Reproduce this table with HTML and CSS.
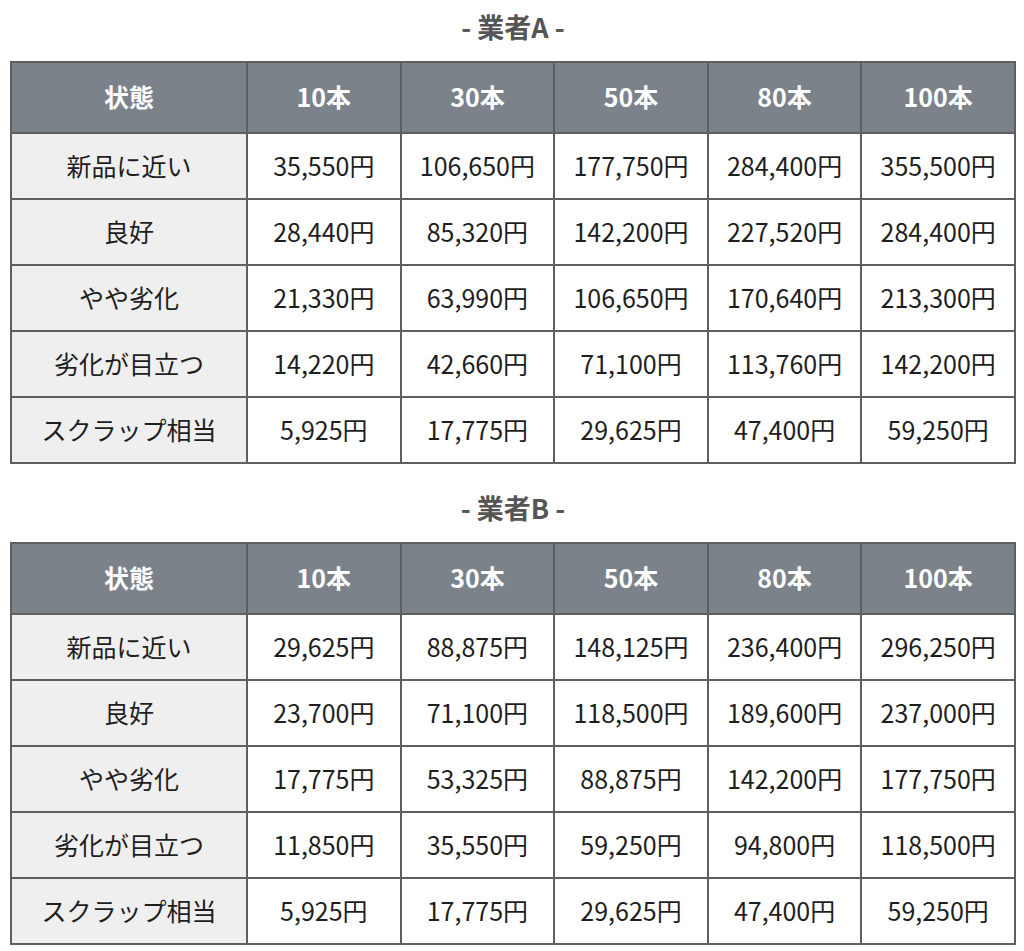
FILE: index.html
```html
<!DOCTYPE html>
<html lang="ja">
<head>
<meta charset="utf-8">
<link rel="stylesheet" href="styles.css">
</head>
<body>
<div class="page">
  <h2 class="title">- 業者A -</h2>
  <table class="price">
    <colgroup><col class="c-state"><col><col><col><col><col></colgroup>
    <thead>
      <tr><th>状態</th><th>10本</th><th>30本</th><th>50本</th><th>80本</th><th>100本</th></tr>
    </thead>
    <tbody>
      <tr><td class="state">新品に近い</td><td>35,550円</td><td>106,650円</td><td>177,750円</td><td>284,400円</td><td>355,500円</td></tr>
      <tr><td class="state">良好</td><td>28,440円</td><td>85,320円</td><td>142,200円</td><td>227,520円</td><td>284,400円</td></tr>
      <tr><td class="state">やや劣化</td><td>21,330円</td><td>63,990円</td><td>106,650円</td><td>170,640円</td><td>213,300円</td></tr>
      <tr><td class="state">劣化が目立つ</td><td>14,220円</td><td>42,660円</td><td>71,100円</td><td>113,760円</td><td>142,200円</td></tr>
      <tr><td class="state">スクラップ相当</td><td>5,925円</td><td>17,775円</td><td>29,625円</td><td>47,400円</td><td>59,250円</td></tr>
    </tbody>
  </table>
  <h2 class="title title-b">- 業者B -</h2>
  <table class="price">
    <colgroup><col class="c-state"><col><col><col><col><col></colgroup>
    <thead>
      <tr><th>状態</th><th>10本</th><th>30本</th><th>50本</th><th>80本</th><th>100本</th></tr>
    </thead>
    <tbody>
      <tr><td class="state">新品に近い</td><td>29,625円</td><td>88,875円</td><td>148,125円</td><td>236,400円</td><td>296,250円</td></tr>
      <tr><td class="state">良好</td><td>23,700円</td><td>71,100円</td><td>118,500円</td><td>189,600円</td><td>237,000円</td></tr>
      <tr><td class="state">やや劣化</td><td>17,775円</td><td>53,325円</td><td>88,875円</td><td>142,200円</td><td>177,750円</td></tr>
      <tr><td class="state">劣化が目立つ</td><td>11,850円</td><td>35,550円</td><td>59,250円</td><td>94,800円</td><td>118,500円</td></tr>
      <tr><td class="state">スクラップ相当</td><td>5,925円</td><td>17,775円</td><td>29,625円</td><td>47,400円</td><td>59,250円</td></tr>
    </tbody>
  </table>
</div>
</body>
</html>
```
FILE: styles.css
```css
html, body {
  margin: 0;
  padding: 0;
  background: #ffffff;
}
body {
  font-family: "Noto Sans CJK JP", "Noto Sans", sans-serif;
  color: #222222;
}
.page {
  padding: 10px 8px 0 10px;
}
.title {
  margin: 0 0 18px 0;
  height: 33px;
  line-height: 33px;
  font-size: 27px;
  font-weight: 700;
  color: #555555;
  text-align: center;
}
.title-b {
  margin-top: 27px;
}
.price {
  width: 1006px;
  border-collapse: collapse;
  table-layout: fixed;
  border: 2px solid #5f5f5f;
}
.c-state {
  width: 236px;
}
.price th,
.price td {
  border: 2px solid #5f5f5f;
  text-align: center;
  padding: 0 0 3px 0;
  font-size: 25px;
  line-height: 36px;
}
.price th {
  background: #7b828a;
  color: #ffffff;
  font-weight: 700;
  height: 66px;
}
.price td {
  height: 61px;
  font-weight: 400;
  color: #1e1e1e;
}
.price td.state {
  background: #efefef;
}
```
